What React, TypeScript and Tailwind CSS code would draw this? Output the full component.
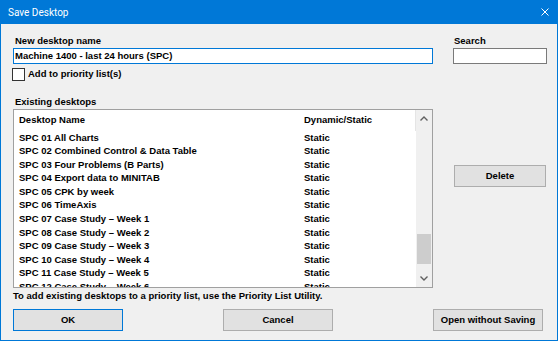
import React from "react";

const rows = [
  "SPC 01 All Charts",
  "SPC 02 Combined Control & Data Table",
  "SPC 03 Four Problems (B Parts)",
  "SPC 04 Export data to MINITAB",
  "SPC 05 CPK by week",
  "SPC 06 TimeAxis",
  "SPC 07 Case Study \u2013 Week 1",
  "SPC 08 Case Study \u2013 Week 2",
  "SPC 09 Case Study \u2013 Week 3",
  "SPC 10 Case Study \u2013 Week 4",
  "SPC 11 Case Study \u2013 Week 5",
  "SPC 12 Case Study \u2013 Week 6",
];

const Button = ({
  children,
  isDefault = false,
  className = "",
}: {
  children: React.ReactNode;
  isDefault?: boolean;
  className?: string;
}) => (
  <div
    className={
      "flex h-[22px] items-center justify-center border bg-[#e1e1e1] " +
      (isDefault ? "border-[#0078d7] " : "border-[#adadad] ") +
      className
    }
  >
    {children}
  </div>
);

const Chevron = ({ up }: { up?: boolean }) => (
  <svg width="8" height="5" viewBox="0 0 8 5">
    <path
      d={up ? "M0.5 4.5 L4 1 L7.5 4.5" : "M0.5 0.5 L4 4 L7.5 0.5"}
      fill="none"
      stroke="#606060"
      strokeWidth="1.4"
    />
  </svg>
);

export default function App() {
  return (
    <div className="flex h-[341px] w-[558px] flex-col overflow-hidden bg-[#f0f0f0] font-['Liberation_Sans',Arial,sans-serif] text-[9.5px] font-bold text-black">
      {/* title bar */}
      <div className="flex h-[24px] shrink-0 items-center justify-between bg-[#0078d7] pl-[8px] pr-[9px]">
        <span className="font-['Roboto',sans-serif] text-[10px] font-normal text-white">
          Save Desktop
        </span>
        <svg width="8" height="8" viewBox="0 0 8 8">
          <path d="M0.5 0.5 L7.5 7.5 M7.5 0.5 L0.5 7.5" stroke="#fff" strokeWidth="1" />
        </svg>
      </div>

      <div className="flex flex-1 flex-col border-x border-b border-[#0078d7] pl-[12px]">
        <div className="flex items-start">
          {/* left column */}
          <div className="flex w-[420px] flex-col">
            <div className="mt-[10px] h-[13px] pl-[2px] leading-[13px]">New desktop name</div>
            <div className="mt-[1px] flex h-[16px] items-center border border-[#0078d7] bg-white px-[1px]">
              Machine 1400 - last 24 hours (SPC)
            </div>
            <div className="mt-[4px] flex h-[13px] items-center">
              <div className="-ml-[1px] h-[13px] w-[13px] border border-[#333] bg-white" />
              <span className="ml-[3px]">Add to priority list(s)</span>
            </div>
            <div className="mt-[14px] h-[13px] pl-[2px] leading-[13px]">Existing desktops</div>

            {/* list box */}
            <div className="mt-[1px] flex h-[179px] overflow-hidden border border-[#a0a0a0] bg-white">
              <div className="flex min-h-0 flex-1 flex-col overflow-hidden">
                <div className="flex h-[20.5px] shrink-0 items-center border-r border-[#e5e5e5] pl-[5px]">
                  <div className="w-[285px]">Desktop Name</div>
                  <div>Dynamic/Static</div>
                </div>
                {rows.map((r) => (
                  <div key={r} className="flex h-[13.6px] shrink-0 items-center pl-[5px] leading-[13.6px]">
                    <div className="w-[285px]">{r}</div>
                    <div>Static</div>
                  </div>
                ))}
              </div>
              <div className="flex w-[16px] shrink-0 flex-col bg-[#f0f0f0]">
                <div className="flex h-[17px] items-center justify-center">
                  <Chevron up />
                </div>
                <div className="flex flex-1 flex-col">
                  <div className="h-[107px]" />
                  <div className="mx-[1px] h-[30px] bg-[#cdcdcd]" />
                </div>
                <div className="flex h-[17px] items-center justify-center">
                  <Chevron />
                </div>
              </div>
            </div>

            <div className="mt-[1px] h-[13px] leading-[13px]">
              To add existing desktops to a priority list, use the Priority List Utility.
            </div>
          </div>

          {/* right column */}
          <div className="ml-[20px] flex w-[94px] flex-col">
            <div className="mt-[10px] h-[13px] pl-[1px] leading-[13px]">Search</div>
            <div className="mt-[1px] h-[16px] border border-[#7a7a7a] bg-white" />
            <Button className="ml-[1px] mt-[101px] w-[92px]">Delete</Button>
          </div>
        </div>

        {/* bottom buttons */}
        <div className="mt-[7px] flex gap-[100px]">
          <Button isDefault className="w-[110px]">OK</Button>
          <Button className="w-[110px]">Cancel</Button>
          <Button className="w-[110px]">Open without Saving</Button>
        </div>
      </div>
    </div>
  );
}
